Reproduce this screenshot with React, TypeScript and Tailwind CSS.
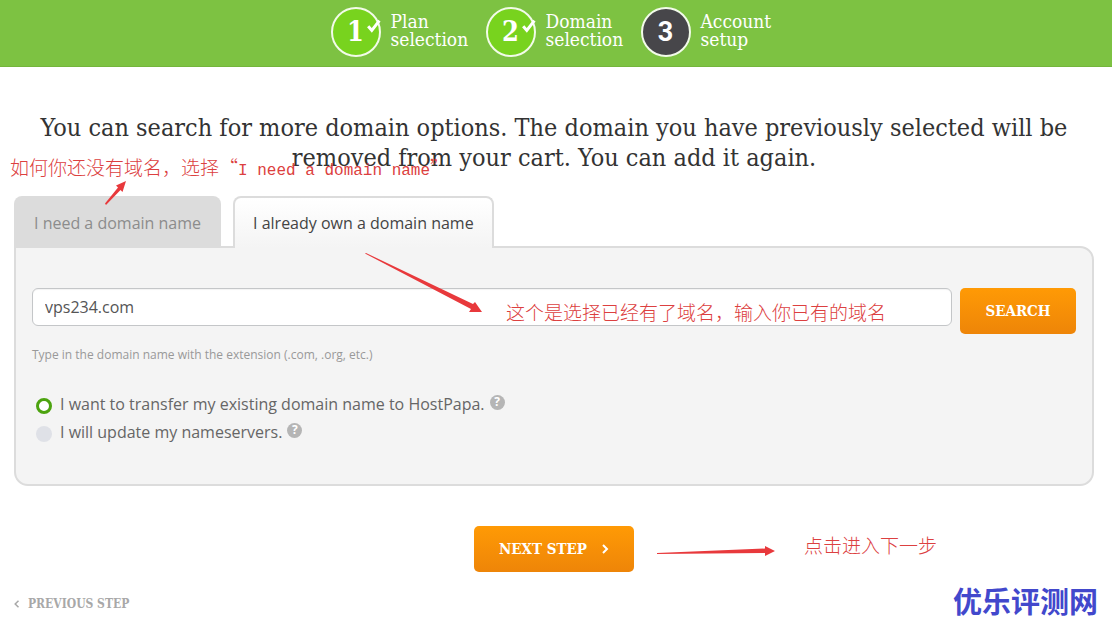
import { useState } from "react";

const steps = [
  { number: 1, lines: ["Plan", "selection"], done: true },
  { number: 2, lines: ["Domain", "selection"], done: true },
  { number: 3, lines: ["Account", "setup"], done: false },
];

const options = [
  { id: "transfer", label: "I want to transfer my existing domain name to HostPapa." },
  { id: "nameservers", label: "I will update my nameservers." },
];

const Steps = () => {
  return (
    <header className="flex h-[67px] justify-center border-b border-[#74b53c] bg-[#7dc242] pt-[7px] pl-1">
      <ol className="flex gap-[10px] font-['Roboto_Slab','DejaVu_Serif_Condensed','DejaVu_Serif',serif] text-white">
        {steps.map((step) => (
          <li key={step.number} className="flex w-[145px] gap-[10px]">
            <div
              className={`relative flex size-[50px] shrink-0 items-center justify-center rounded-full border-2 border-[#f2fbe9] text-[27px] font-bold ${
                step.done ? "bg-[#78d31e]" : "bg-[#47464a]"
              }`}
            >
              <span className={step.done ? "" : "font-['Roboto',sans-serif]"}>
                {step.number}
              </span>
              {step.done && (
                <svg
                  viewBox="0 0 14 14"
                  className="absolute top-[10px] -right-[2px] size-[14px]"
                  fill="none"
                  stroke="currentColor"
                  strokeWidth="3"
                >
                  <path d="M1.2 7.2 L4.8 11.4 L12.4 1.6" />
                </svg>
              )}
            </div>
            <p className="pt-[5px] text-[19px] leading-[18px]">
              {step.lines[0]}
              <br />
              {step.lines[1]}
            </p>
          </li>
        ))}
      </ol>
    </header>
  );
};

const HelpButton = () => {
  return (
    <button
      type="button"
      aria-label="Help"
      className="mb-1 flex size-[15px] items-center justify-center rounded-full bg-[#b5b5b5] font-['Open_Sans',sans-serif] text-[12px] leading-none font-bold text-white"
    >
      ?
    </button>
  );
};

const Arrow = ({ className, points, viewBox }: { className: string; points: string; viewBox: string }) => {
  return (
    <svg viewBox={viewBox} className={`pointer-events-none absolute ${className}`} fill="#e8393c">
      <polygon points={points} />
    </svg>
  );
};

const App = () => {
  const [domain, setDomain] = useState("vps234.com");
  const [option, setOption] = useState("transfer");

  return (
    <div className="relative bg-white pb-3 font-['Open_Sans','Noto_Sans_CJK_SC',sans-serif] text-[16px] text-[#666]">
      <Steps />

      <main className="pr-[18px] pl-[14px]">
        <h1 className="mt-[46px] text-center font-['Roboto_Slab','DejaVu_Serif_Condensed','DejaVu_Serif',serif] text-[25px] leading-[30px] text-[#333]">
          You can search for more domain options. The domain you have previously
          selected will be removed from your cart. You can add it again.
        </h1>

        <div className="mt-[23px] flex gap-3">
          <button
            type="button"
            className="h-[50px] rounded-t-[8px] bg-[#dcdcdc] px-5 pt-1 text-[#8c8c8c]"
          >
            I need a domain name
          </button>
          <button
            type="button"
            className="relative z-10 -mb-[2px] h-[52px] rounded-t-[8px] border-2 border-b-0 border-[#dcdcdc] bg-linear-to-b from-white to-[#f4f4f4] px-[18px] text-[#444]"
          >
            I already own a domain name
          </button>
        </div>

        <form
          className="h-60 rounded-[14px] rounded-tl-none border-2 border-[#dcdcdc] bg-[#f4f4f4] px-4 pt-10"
          onSubmit={(e) => e.preventDefault()}
        >
          <div className="flex items-start gap-2">
            <input
              type="text"
              aria-label="Domain name"
              value={domain}
              onChange={(e) => setDomain(e.target.value)}
              className="h-[38px] min-w-0 flex-1 rounded-[6px] border border-[#c4c6c8] bg-white px-3 text-[#555] inset-shadow-xs"
            />
            <button
              type="submit"
              className="h-[46px] w-[116px] rounded-[5px] bg-linear-to-b from-[#ff9a05] to-[#ee8508] font-['Roboto_Slab','DejaVu_Serif_Condensed','DejaVu_Serif',serif] text-[15px] font-bold text-white"
            >
              SEARCH
            </button>
          </div>
          <p className="mt-3 text-[12px] leading-[18px] text-[#999]">
            Type in the domain name with the extension (.com, .org, etc.)
          </p>

          <div className="mt-[26px]">
            {options.map((item) => (
              <div key={item.id} className="flex h-7 items-center gap-[5px] pl-1">
                <label className="flex items-center gap-2">
                  <input
                    type="radio"
                    name="option"
                    checked={option === item.id}
                    onChange={() => setOption(item.id)}
                    className="mt-1 size-4 appearance-none rounded-full bg-[#dfe1e7] checked:border-3 checked:border-[#4ca30f] checked:bg-white"
                  />
                  {item.label}
                </label>
                <HelpButton />
              </div>
            ))}
          </div>
        </form>

        <div className="mt-10 flex justify-center">
          <button
            type="button"
            className="flex h-[46px] w-[160px] items-center justify-center gap-[14px] rounded-[5px] bg-linear-to-b from-[#ff9a05] to-[#ee8508] font-['Roboto_Slab','DejaVu_Serif_Condensed','DejaVu_Serif',serif] text-[15px] font-bold text-white"
          >
            NEXT STEP
            <svg viewBox="0 0 8 10" className="h-[10px] w-2" fill="none" stroke="currentColor" strokeWidth="2">
              <path d="M2 1 L6 5 L2 9" />
            </svg>
          </button>
        </div>

        <a
          href="#previous"
          className="mt-[23px] inline-flex items-center gap-2 font-['Roboto_Slab','DejaVu_Serif_Condensed','DejaVu_Serif',serif] text-[12px] leading-[18px] font-bold text-[#a8a8a8]"
        >
          <svg viewBox="0 0 6 8" className="h-2 w-[6px]" fill="none" stroke="currentColor" strokeWidth="1.5">
            <path d="M4.5 0.8 L1.2 4 L4.5 7.2" />
          </svg>
          PREVIOUS STEP
        </a>
      </main>

      {/* tutorial notes drawn over the page */}
      <div
        lang="zh-CN"
        className="pointer-events-none absolute inset-0 font-['Noto_Sans_CJK_SC',sans-serif] text-[19px] leading-7 font-light whitespace-nowrap text-[#dc4040]"
      >
        <p className="absolute top-[153px] left-[10px]">
          如何你还没有域名，选择“
          <span className="font-['Liberation_Mono',monospace] text-[16px]">
            I need a domain name
          </span>
          ”
        </p>
        <p className="absolute top-[298px] left-[506px]">
          这个是选择已经有了域名，输入你已有的域名
        </p>
        <p className="absolute top-[531px] left-[804px]">点击进入下一步</p>
        <p className="absolute top-[579px] left-[953px] text-[29px] leading-[42px] font-bold text-[#4248cc]">
          优乐评测网
        </p>
      </div>
      <Arrow
        className="top-[180px] left-[104px] h-[26px] w-[24px]"
        viewBox="0 0 24 26"
        points="1,23.5 14,7.5 12,5.5 22,1 18.5,12 16.5,10 2,25"
      />
      <Arrow
        className="top-[252px] left-[364px] h-[64px] w-[120px]"
        viewBox="0 0 120 64"
        points="1,1.5 2,1 109,52 111,50 118,60 105,60 107,57"
      />
      <Arrow
        className="top-[544px] left-[656px] h-[14px] w-[120px]"
        viewBox="0 0 120 14"
        points="1,9 109,4.5 109,2 119,7 109,12 109,9 1,10"
      />
    </div>
  );
};

export default App;
